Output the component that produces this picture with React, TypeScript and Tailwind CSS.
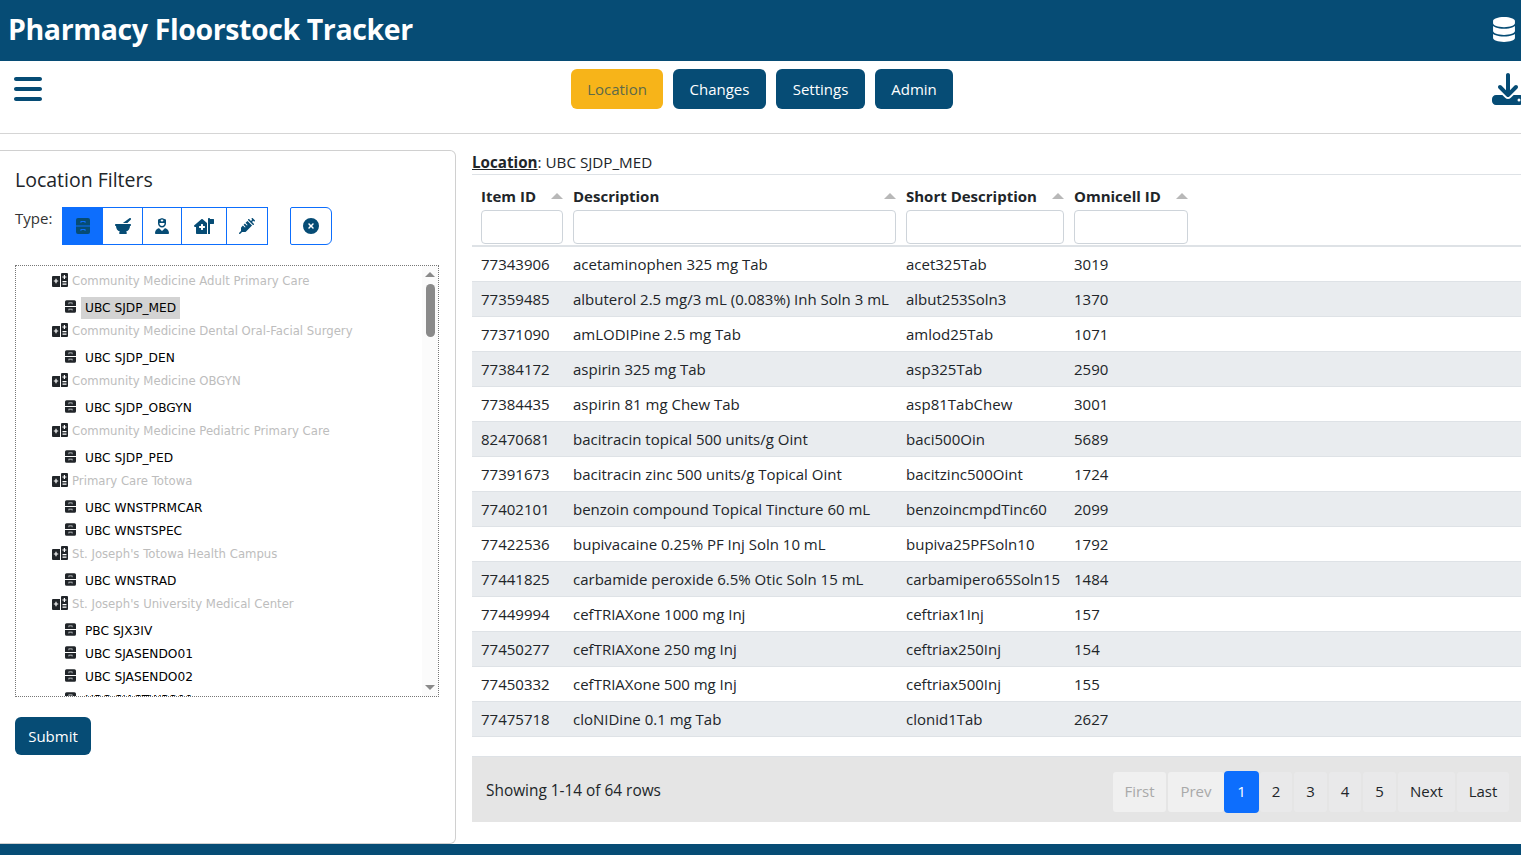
import React from 'react';
import { FaBars, FaDatabase, FaDownload, FaMortarPestle, FaUserNurse, FaSyringe, FaCircleXmark, FaHouseMedicalFlag } from 'react-icons/fa6';

const rows = [
  ['77343906', 'acetaminophen 325 mg Tab', 'acet325Tab', '3019'],
  ['77359485', 'albuterol 2.5 mg/3 mL (0.083%) Inh Soln 3 mL', 'albut253Soln3', '1370'],
  ['77371090', 'amLODIPine 2.5 mg Tab', 'amlod25Tab', '1071'],
  ['77384172', 'aspirin 325 mg Tab', 'asp325Tab', '2590'],
  ['77384435', 'aspirin 81 mg Chew Tab', 'asp81TabChew', '3001'],
  ['82470681', 'bacitracin topical 500 units/g Oint', 'baci500Oin', '5689'],
  ['77391673', 'bacitracin zinc 500 units/g Topical Oint', 'bacitzinc500Oint', '1724'],
  ['77402101', 'benzoin compound Topical Tincture 60 mL', 'benzoincmpdTinc60', '2099'],
  ['77422536', 'bupivacaine 0.25% PF Inj Soln 10 mL', 'bupiva25PFSoln10', '1792'],
  ['77441825', 'carbamide peroxide 6.5% Otic Soln 15 mL', 'carbamipero65Soln15', '1484'],
  ['77449994', 'cefTRIAXone 1000 mg Inj', 'ceftriax1Inj', '157'],
  ['77450277', 'cefTRIAXone 250 mg Inj', 'ceftriax250Inj', '154'],
  ['77450332', 'cefTRIAXone 500 mg Inj', 'ceftriax500Inj', '155'],
  ['77475718', 'cloNIDine 0.1 mg Tab', 'clonid1Tab', '2627'],
];

const tree = [
  { group: 'Community Medicine Adult Primary Care', leaves: ['UBC SJDP_MED'] },
  { group: 'Community Medicine Dental Oral-Facial Surgery', leaves: ['UBC SJDP_DEN'] },
  { group: 'Community Medicine OBGYN', leaves: ['UBC SJDP_OBGYN'] },
  { group: 'Community Medicine Pediatric Primary Care', leaves: ['UBC SJDP_PED'] },
  { group: 'Primary Care Totowa', leaves: ['UBC WNSTPRMCAR', 'UBC WNSTSPEC'] },
  { group: "St. Joseph's Totowa Health Campus", leaves: ['UBC WNSTRAD'] },
  { group: "St. Joseph's University Medical Center", leaves: ['PBC SJX3IV', 'UBC SJASENDO01', 'UBC SJASENDO02', 'UBC SJASTWR300'] },
];

// two-drawer cabinet, not in the icon sets
function Cabinet({ className, handle }: { className?: string; handle: string }) {
  return (
    <svg viewBox="0 0 14 16" className={className} fill="currentColor">
      <path d="M2 0h10a2 2 0 0 1 2 2v5.4H0V2a2 2 0 0 1 2-2zM0 8.6h14V14a2 2 0 0 1-2 2H2a2 2 0 0 1-2-2z" />
      <path d="M4.5 3h5v2H8.6V3.9H5.4V5h-.9zM4.5 11h5v2H8.6v-1.1H5.4V13h-.9z" fill={handle} />
    </svg>
  );
}

function Campus({ className }: { className?: string }) {
  return (
    <svg viewBox="0 0 16 14" className={className} fill="currentColor">
      <path d="M1 3h7v11H1a1 1 0 0 1-1-1V4a1 1 0 0 1 1-1zM9 1a1 1 0 0 1 1-1h5a1 1 0 0 1 1 1v12a1 1 0 0 1-1 1H9z" />
      <path d="M3.4 5.8h1.2v1.6h1.6v1.2H4.6v1.6H3.4V8.6H1.8V7.4h1.6zM11.8 2h1.2v1.4h1.4v1.2H13V6h-1.2V4.6h-1.4V3.4h1.4zM10.5 8h4v1.2h-4zM10.5 10.5h4v1.2h-4z" fill="#ffffff" />
    </svg>
  );
}

const pages = [
  { label: 'First', cls: 'w-[53px] mr-[2px] text-[#a9a9a9] bg-[#f0f0f0]' },
  { label: 'Prev', cls: 'w-[56px] text-[#a9a9a9] bg-[#f0f0f0]' },
  { label: '1', cls: 'w-[35px] !h-[42px] mr-[1px] rounded-[4px] text-white bg-[#0d6efd]' },
  { label: '2', cls: 'w-[32px] mr-[2px] text-[#212529] bg-[#e9e9ea]' },
  { label: '3', cls: 'w-[33px] mr-[2px] text-[#212529] bg-[#e9e9ea]' },
  { label: '4', cls: 'w-[32px] mr-[2px] text-[#212529] bg-[#e9e9ea]' },
  { label: '5', cls: 'w-[33px] mr-[2px] text-[#212529] bg-[#e9e9ea]' },
  { label: 'Next', cls: 'w-[57px] mr-[2px] text-[#212529] bg-[#e9e9ea]' },
  { label: 'Last', cls: 'w-[52px] text-[#212529] bg-[#e9e9ea]' },
];

export default function App() {
  return (
    <div className="h-[855px] w-[1521px] overflow-hidden bg-white text-[#212529] text-[15px] font-['Open_Sans',sans-serif] flex flex-col">
      {/* Title bar */}
      <header className="h-[61px] shrink-0 bg-[#064c75] flex items-center justify-between pl-[8px]">
        <h1 className="text-[28.5px] leading-[38px] font-bold text-white tracking-[-0.4px] -mt-[3px]">Pharmacy Floorstock Tracker</h1>
        <FaDatabase className="text-white mr-[6px] w-[22px] h-[25px] -mt-[2px]" />
      </header>

      {/* Nav */}
      <nav className="h-[73px] shrink-0 border-b border-[#d5d5d5] relative flex justify-center pt-[8px] pl-[3px] gap-[10px]">
        <FaBars className="absolute left-[14px] top-[12px] text-[#064c75] w-[28px] h-[32px]" />
        <button className="h-[40px] w-[92px] rounded-[6px] bg-[#f7b419] text-[#5c6a4a]">Location</button>
        <button className="h-[40px] w-[93px] rounded-[6px] bg-[#064c75] text-white">Changes</button>
        <button className="h-[40px] w-[89px] rounded-[6px] bg-[#064c75] text-white">Settings</button>
        <button className="h-[40px] w-[78px] rounded-[6px] bg-[#064c75] text-white">Admin</button>
        <FaDownload className="absolute left-[1492px] top-[12px] text-[#064c75] w-[32px] h-[32px]" />
      </nav>

      <main className="flex-1 flex items-start pt-[16px] min-h-0">
        {/* Filters card */}
        <section className="w-[456px] h-[694px] shrink-0 border border-[#d0d0d0] border-l-0 rounded-r-[6px] pl-[15px] pr-[16px] pt-[16px]">
          <h2 className="text-[19.5px] leading-[26px] font-normal">Location Filters</h2>
          <div className="flex items-start mt-[14px]">
            <span className="text-[15px] leading-[22px] mr-[10px] text-[#333]">Type:</span>
            <div className="flex h-[38px] border border-[#0d6efd] text-[#064c75]">
              <span className="w-[39px] bg-[#0d6efd] flex items-center justify-center"><Cabinet handle="#0d6efd" className="w-[14px] h-[16px]" /></span>
              <span className="w-[40px] border-l border-[#0d6efd] flex items-center justify-center"><FaMortarPestle size={16} /></span>
              <span className="w-[39px] border-l border-[#0d6efd] flex items-center justify-center"><FaUserNurse size={16} /></span>
              <span className="w-[45px] border-l border-[#0d6efd] flex items-center justify-center"><FaHouseMedicalFlag size={20} /></span>
              <span className="w-[41px] border-l border-[#0d6efd] flex items-center justify-center"><FaSyringe size={16} /></span>
            </div>
            <span className="ml-[22px] w-[42px] h-[38px] border border-[#0d6efd] rounded-r-[6px] rounded-l-[2px] flex items-center justify-center text-[#064c75]"><FaCircleXmark size={16} /></span>
          </div>

          {/* Tree */}
          <div className="relative mt-[20px] h-[432px] border border-dotted border-[#777] overflow-hidden font-['DejaVu_Sans',sans-serif] pt-[4px]">
            {tree.map((g) => (
              <div key={g.group}>
                <div className="h-[23px] mb-[4px] pl-[36px] flex items-center text-[11.7px] text-[#bdbdbd] whitespace-nowrap">
                  <Campus className="text-[#212529] w-[16px] h-[14px] mr-[4px] -mt-[4px]" />
                  <span>{g.group}</span>
                </div>
                {g.leaves.map((l) => (
                  <div key={l} className="h-[23px] pl-[49px] flex items-center text-[12.2px] text-black whitespace-nowrap">
                    <Cabinet handle="#d9dde0" className="text-[#212529] w-[11px] h-[13px] mr-[5px] -mt-[4px]" />
                    <span className={l === 'UBC SJDP_MED' ? 'bg-[#d3d3d3] px-[4px] leading-[22px] mb-[2px]' : 'px-[4px]'}>{l}</span>
                  </div>
                ))}
              </div>
            ))}
            {/* Scrollbar */}
            <div className="absolute right-0 top-0 bottom-0 w-[16px] bg-[#fbfbfb]">
              <div className="absolute top-[6px] left-[3px] w-0 h-0 border-x-[5px] border-x-transparent border-b-[5px] border-b-[#8a8a8a]" />
              <div className="absolute top-[18px] left-[4px] w-[9px] h-[53px] rounded-full bg-[#8a8a8a]" />
              <div className="absolute bottom-[6px] left-[3px] w-0 h-0 border-x-[5px] border-x-transparent border-t-[5px] border-t-[#8a8a8a]" />
            </div>
          </div>

          <button className="mt-[20px] w-[76px] h-[38px] rounded-[6px] bg-[#064c75] text-white">Submit</button>
        </section>

        {/* Results */}
        <section className="flex-1 min-w-0 ml-[16px] pt-[1px]">
          <div className="h-[23px] leading-[22px] text-[15.2px]"><span className="font-bold underline">Location</span>: UBC SJDP_MED</div>
          <table className="w-[1049px] table-fixed border-collapse border-t border-[#dee2e6]">
            <colgroup>
              <col className="w-[92px]" />
              <col className="w-[333px]" />
              <col className="w-[168px]" />
              <col className="w-[124px]" />
              <col />
            </colgroup>
            <thead>
              <tr className="border-b-2 border-[#dee2e6]">
                {['Item ID', 'Description', 'Short Description', 'Omnicell ID'].map((h) => (
                  <th key={h} className="pl-[9px] pr-[1px] pt-[9px] pb-[1px] text-left font-bold align-top">
                    <div className="flex items-center justify-between h-[24px] whitespace-nowrap">
                      <span>{h}</span>
                      <span className="w-0 h-0 border-x-[6px] border-x-transparent border-b-[6px] border-b-[#b8b8b8]" />
                    </div>
                    <input className="block w-full h-[34px] border border-[#ced4da] rounded-[4px] bg-white mt-[2px]" />
                  </th>
                ))}
                <th />
              </tr>
            </thead>
            <tbody>
              {rows.map((r, i) => (
                <tr key={r[0]} className={`h-[35px] border-b border-[#dee2e6] ${i % 2 ? 'bg-[#e9ecef]' : 'bg-white'}`}>
                  {r.map((c) => (
                    <td key={c} className={`px-[9px] whitespace-nowrap ${i === 0 ? '' : 'pt-[2px]'}`}>{c}</td>
                  ))}
                  <td />
                </tr>
              ))}
            </tbody>
          </table>

          {/* Pagination */}
          <div className="mt-[19px] w-[1049px] h-[66px] bg-[#e5e5e5] border-t border-[#dee2e6] flex items-center justify-between pl-[14px] pr-[12px]">
            <span className="text-[15.4px] mt-[3px]">Showing 1-14 of 64 rows</span>
            <div className="flex items-center mt-[5px]">
              {pages.map((p) => (
                <span key={p.label} className={`h-[40px] rounded-[3px] flex items-center justify-center ${p.cls}`}>{p.label}</span>
              ))}
            </div>
          </div>
        </section>
      </main>

      <footer className="h-[11px] shrink-0 bg-[#064c75]" />
    </div>
  );
}
